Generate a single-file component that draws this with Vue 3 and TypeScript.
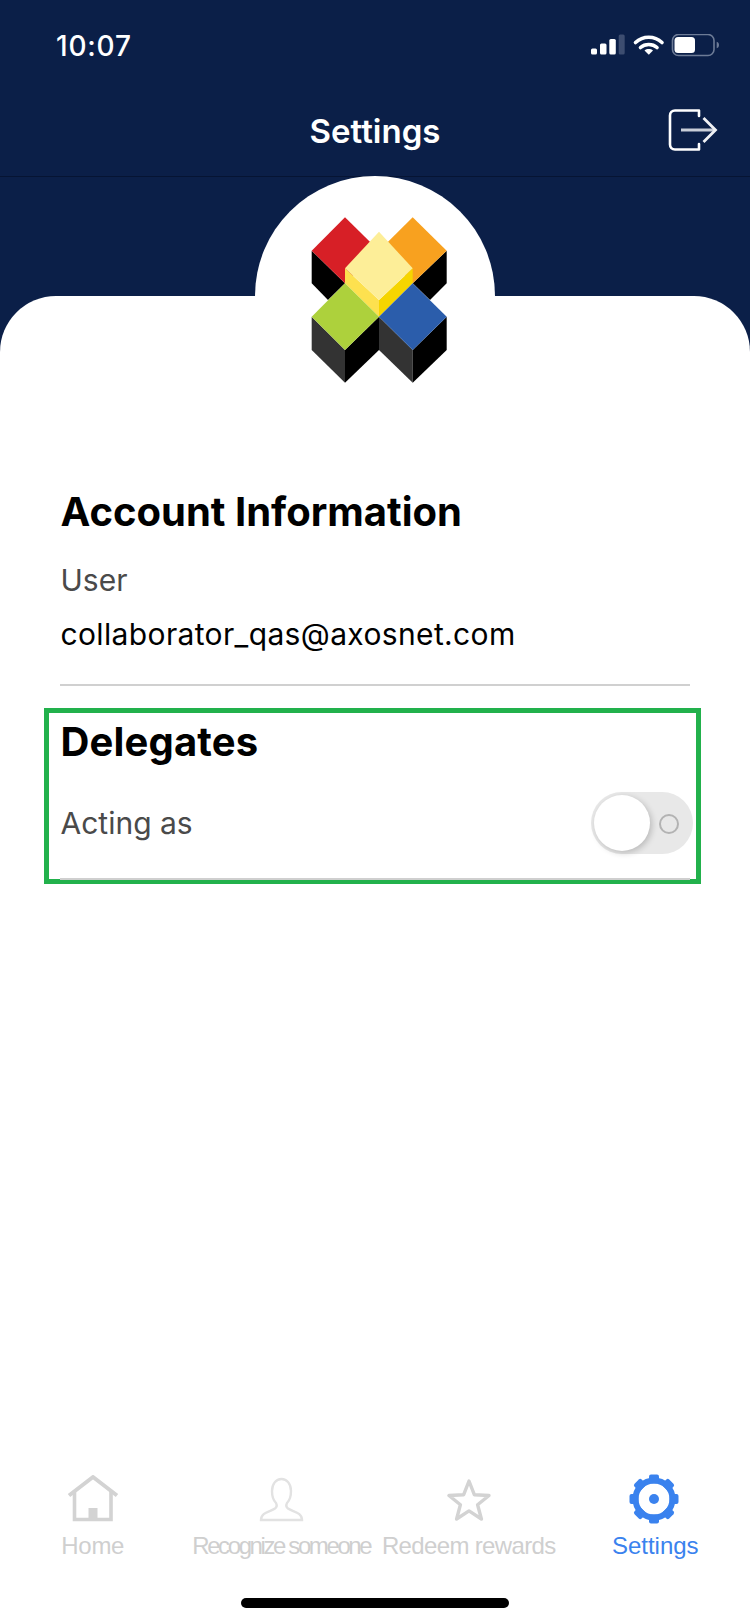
<script setup lang="ts">
const tabs = [
  { key: 'home', label: 'Home', cls: 'home' },
  { key: 'person', label: 'Recognize someone', cls: 'recognize' },
  { key: 'star', label: 'Redeem rewards', cls: 'redeem' },
  { key: 'gear', label: 'Settings', cls: 'active' },
]
const teeth = [0, 45, 90, 135, 180, 225, 270, 315]
</script>

<template>
  <div class="page">
    <header class="top">
      <div class="status">
        <span class="time">10:07</span>
        <svg class="status-icons" width="130" height="24" viewBox="0 0 130 24">
          <rect x="1" y="14.5" width="6" height="6" rx="1.5" fill="#fff" />
          <rect x="10" y="9.5" width="6.5" height="11" rx="1.5" fill="#fff" />
          <rect x="19.3" y="5" width="6.5" height="15.5" rx="1.5" fill="#fff" />
          <rect x="28.7" y="0.5" width="6" height="20" rx="1.5" fill="#3d4d70" />
          <path d="M45.5 8.5C53 1.5 64.5 1.5 72 8.5M50.5 13.5C55 9.5 62.5 9.5 67 13.5" fill="none" stroke="#fff" stroke-width="3.6" stroke-linecap="round" />
          <path d="M54.5 16.5C57 14.6 60.5 14.6 63 16.5L58.8 20.8Z" fill="#fff" />
          <rect x="82.5" y="0.5" width="41.5" height="21" rx="6" fill="none" stroke="#6d7b96" stroke-width="1.6" />
          <rect x="84.5" y="3" width="20.5" height="16" rx="3.5" fill="#fff" />
          <path d="M126.7 7.8C128.4 8.3 129 9.6 129 11C129 12.4 128.4 13.7 126.7 14.2Z" fill="#6d7b96" />
        </svg>
      </div>
      <div class="nav">
        <span class="title">Settings</span>
        <svg class="logout" width="52" height="44" viewBox="0 0 52 44">
          <path d="M32 2.5H8C5 2.5 3 4.5 3 7.5V36.5C3 39.5 5 41.5 8 41.5H32V36M32 2.5V8" fill="none" stroke="#fff" stroke-width="2.6" stroke-linejoin="round" stroke-linecap="round" />
          <path d="M14 22H48" stroke="#c9ced8" stroke-width="3" />
          <path d="M36.5 10L48.5 22L36.5 34" fill="none" stroke="#f0f1f4" stroke-width="2.8" />
        </svg>
      </div>
    </header>

    <div class="hero">
      <div class="avatar">
        <svg class="logo" width="140" height="170" viewBox="0 0 140 170">
          <path d="M1.7 35.7L35 68.3L18 85L1.7 68.3Z" fill="#000" />
          <path d="M136.7 35.7V68.3L120 85L102.7 68.3Z" fill="#000" />
          <path d="M35 2.3L69 35.7L35 68.3L1.7 35.7Z" fill="#d71f26" />
          <path d="M102.7 2.3L136.7 35.7L102.7 68.3L69 35.7Z" fill="#f8a11f" />
          <path d="M35 53.3L69 85V101.7L35 68.3Z" fill="#fde14f" />
          <path d="M102.7 53.3L69 85V101.7L102.7 68.3Z" fill="#f6d500" />
          <path d="M69 16.7L102.7 53.3L69 85L35 53.3Z" fill="#fdee98" />
          <path d="M1.7 101.7L35 135V167.7L1.7 135Z" fill="#333" />
          <path d="M35 135L69 101.7V135L35 167.7Z" fill="#000" />
          <path d="M69 101.7L102.7 135V167.7L69 135Z" fill="#333" />
          <path d="M102.7 135L136.7 101.7V135L102.7 167.7Z" fill="#000" />
          <path d="M35 68.3L69 101.7L35 135L1.7 101.7Z" fill="#add13c" />
          <path d="M102.7 68.3L136.7 101.7L102.7 135L69 101.7Z" fill="#2b5dab" />
        </svg>
      </div>
      <div class="sheet"></div>
    </div>

    <main class="content">
      <section class="account">
        <h2>Account Information</h2>
        <p class="label">User</p>
        <p class="email">collaborator_qas@axosnet.com</p>
      </section>

      <section class="delegates">
        <h2>Delegates</h2>
        <div class="acting">
          <span class="label">Acting as</span>
          <div class="toggle">
            <span class="knob"></span>
            <span class="off-mark"></span>
          </div>
        </div>
      </section>
    </main>

    <footer class="tabbar">
      <div v-for="tab in tabs" :key="tab.key" class="tab" :class="tab.cls">
        <svg class="tab-icon" width="64" height="50" viewBox="0 0 64 50">
          <template v-if="tab.key === 'home'">
            <path d="M7 21.5L31 3L55 21.5" fill="none" stroke="#d3d3d3" stroke-width="4" stroke-linejoin="round" />
            <path d="M12.5 17V45.5H49V17" fill="none" stroke="#d3d3d3" stroke-width="3.6" />
            <rect x="26.5" y="34" width="9" height="12" fill="#d3d3d3" />
          </template>
          <path
            v-else-if="tab.key === 'person'"
            d="M12 46H53C53 38 44 38 39 34.5C37 33 37 31 38 29C41 26 42 21 42 17C42 10 38 5 32.5 5C27 5 23 10 23 17C23 21 24 26 27 29C28 31 28 33 26 34.5C21 38 12 38 12 46Z"
            fill="none"
            stroke="#e2e2e2"
            stroke-width="2.4"
          />
          <path
            v-else-if="tab.key === 'star'"
            d="M32 7L37.3 20.7L52 21.5L40.6 30.8L44.4 45L32 36.9L19.6 45L23.4 30.8L12 21.5L26.7 20.7Z"
            fill="none"
            stroke="#d3d3d3"
            stroke-width="3.4"
            stroke-linejoin="round"
          />
          <g v-else fill="#3a82ee">
            <circle cx="30" cy="25" r="18.5" fill="none" stroke="#3a82ee" stroke-width="6" />
            <circle cx="30" cy="25" r="5" />
            <rect v-for="a in teeth" :key="a" x="25" y="0.5" width="10" height="9" rx="2" :transform="`rotate(${a} 30 25)`" />
          </g>
        </svg>
        <span class="tab-label">{{ tab.label }}</span>
      </div>
    </footer>
    <div class="home-bar"></div>
  </div>
</template>

<style>
html,
body {
  margin: 0;
  background: #fff;
}
</style>

<style scoped>
.page {
  position: relative;
  display: flex;
  flex-direction: column;
  width: 750px;
  height: 1624px;
  overflow: hidden;
  background: #fff;
  font-family: Inter, 'Liberation Sans', sans-serif;
}
.top {
  background: #0b1f48;
  color: #fff;
  border-bottom: 1px solid #061433;
}
.status {
  display: flex;
  align-items: center;
  justify-content: space-between;
  box-sizing: border-box;
  height: 88px;
  padding: 4px 30px 0 56px;
}
.time {
  font-size: 28px;
  font-weight: 500;
  letter-spacing: 0.8px;
}
.nav {
  position: relative;
  display: flex;
  align-items: center;
  justify-content: center;
  height: 88px;
}
.title {
  font-size: 33px;
  font-weight: 600;
  margin-top: -2px;
}
.logout {
  position: absolute;
  right: 31px;
  top: 20px;
}
.hero {
  position: relative;
  padding-top: 119px;
  background: #0b1f48;
}
.sheet {
  height: 90px;
  background: #fff;
  border-radius: 56px 56px 0 0;
}
.avatar {
  position: absolute;
  top: -1px;
  left: 255px;
  width: 240px;
  height: 240px;
  box-sizing: border-box;
  padding: 39px 0 0 55px;
  border-radius: 50%;
  background: #fff;
  z-index: 1;
}
.logo {
  filter: blur(0.4px);
}
.content {
  flex: 1;
}
h2 {
  margin: 0;
  color: #000;
  font-size: 40px;
  line-height: 48px;
  font-weight: 700;
}
.account {
  margin: 102px 60px 0;
  padding: 0 0 32px 0.5px;
  border-bottom: 2px solid #d0d0d0;
}
.account h2 {
  margin-bottom: 26px;
}
.label {
  margin: 0;
  color: #4a4a4a;
  font-size: 30px;
  line-height: 36px;
}
.email {
  margin: 18px 0 0;
  color: #000;
  font-size: 30px;
  line-height: 36px;
  letter-spacing: 0.36px;
}
.delegates {
  position: relative;
  box-sizing: border-box;
  width: 657px;
  height: 176px;
  margin: 22px 0 0 44px;
  padding: 5px 11px 0 11.5px;
  border: 5px solid #22b14c;
}
.delegates h2 {
  letter-spacing: 0.15px;
}
.delegates::after {
  content: '';
  position: absolute;
  left: 11px;
  right: 6px;
  bottom: -1px;
  height: 2px;
  background: #cfcfcf;
}
.acting {
  display: flex;
  align-items: center;
  justify-content: space-between;
  margin-top: 26px;
}
.toggle {
  position: relative;
  width: 102px;
  height: 62px;
  margin-right: -8px;
  border-radius: 31px;
  background: #e8e8e8;
}
.knob {
  position: absolute;
  left: 3px;
  top: 3px;
  width: 56px;
  height: 56px;
  border-radius: 50%;
  background: #fff;
  box-shadow: 2px 2px 6px rgba(0, 0, 0, 0.2);
}
.off-mark {
  position: absolute;
  left: 68px;
  top: 22px;
  width: 20px;
  height: 20px;
  box-sizing: border-box;
  border: 2.5px solid #b3b3b3;
  border-radius: 50%;
}
.tabbar {
  display: grid;
  grid-template-columns: repeat(4, 1fr);
  height: 124px;
  margin-bottom: 26px;
}
.tab {
  display: flex;
  flex-direction: column;
  align-items: center;
  color: #cfcfcf;
  font-family: 'Liberation Sans', Arial, sans-serif;
  font-size: 24px;
  white-space: nowrap;
}
.tab-icon {
  filter: blur(0.4px);
}
.tab-label {
  line-height: 30px;
  margin-top: 7px;
}
.home .tab-label {
  letter-spacing: -0.3px;
  margin-left: -2px;
}
.recognize .tab-label {
  letter-spacing: -2.4px;
}
.redeem .tab-label {
  letter-spacing: -0.65px;
}
.active {
  color: #3a82ee;
}
.active .tab-label {
  margin-left: -2px;
}
.home-bar {
  position: absolute;
  left: 241px;
  bottom: 16px;
  width: 268px;
  height: 10px;
  border-radius: 5px;
  background: #000;
}
</style>
